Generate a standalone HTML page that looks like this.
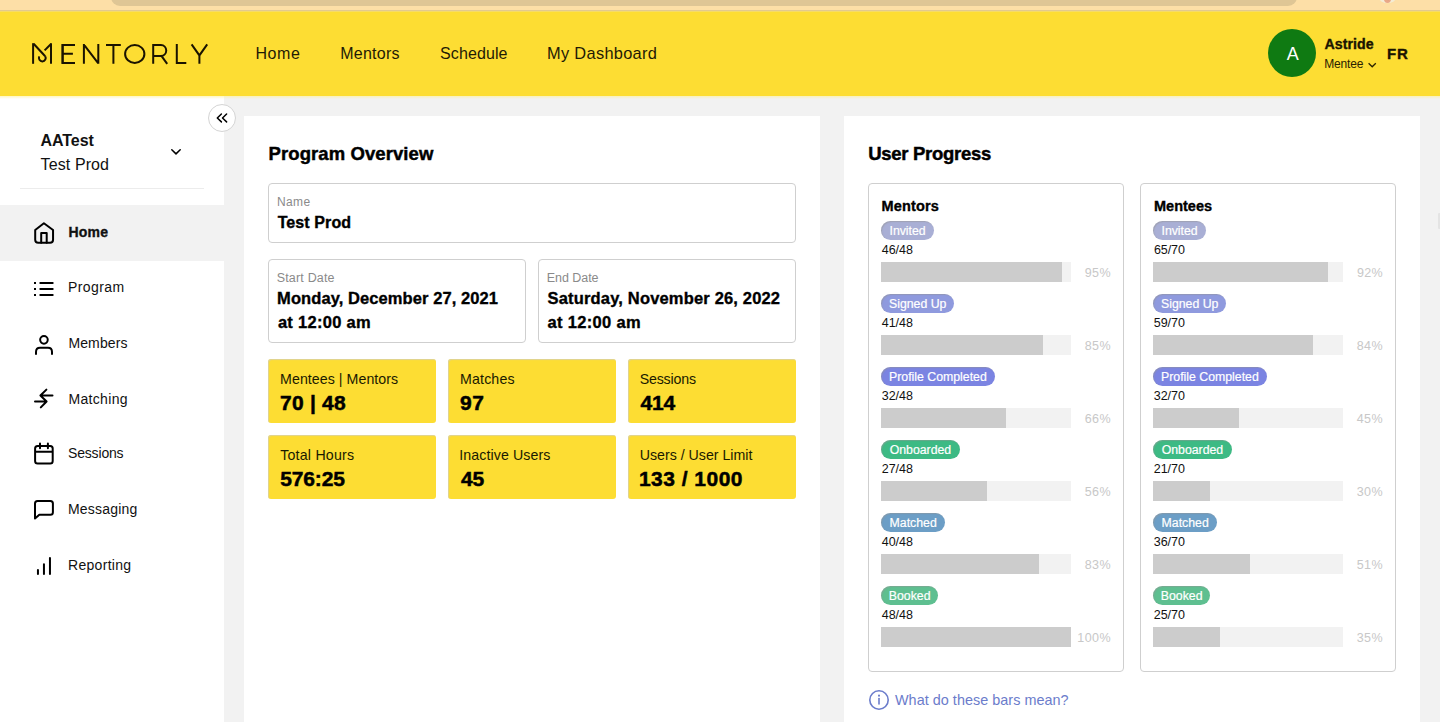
<!DOCTYPE html>
<html><head><meta charset="utf-8"><title>Mentorly</title>
<style>
*{margin:0;padding:0;box-sizing:border-box}
html,body{width:1440px;height:722px;overflow:hidden;background:#f2f2f2;font-family:"Liberation Sans",sans-serif}
.a{position:absolute}
.t{position:absolute;white-space:nowrap;line-height:1;font-family:"Liberation Sans",sans-serif}
</style></head><body>

<div class="a" style="left:0;top:0;width:1440px;height:11px;background:#fddfa7"></div>
<div class="a" style="left:111px;top:-10px;width:1186px;height:16px;background:#dfc695;border-radius:0 0 9px 9px"></div>
<div class="a" style="left:0;top:10px;width:1440px;height:1px;background:#e2c98f"></div>
<div class="a" style="left:0;top:11px;width:1440px;height:85px;background:#fddd33"></div>
<div class="a" style="left:0;top:11px;width:1440px;height:1px;background:#f6dc66"></div>
<div class="a" style="left:1379px;top:-8px;width:17px;height:11px;border-radius:50%;background:#f3efdc;opacity:.85"></div><div class="a" style="left:1384px;top:-6px;width:7px;height:8.5px;border-radius:50%;background:radial-gradient(circle at 60% 30%,#8a4a25 0,#c07a52 2px,#e9a888 4px)"></div>
<div class="a" style="left:0;top:96px;width:224px;height:626px;background:#fff"></div>
<div class="a" style="left:20px;top:188px;width:184px;height:1px;background:#ececec"></div>
<div class="a" style="left:0;top:205px;width:224px;height:56px;background:#f2f2f2"></div>
<div class="a" style="left:0;top:96px;width:1440px;height:3px;background:linear-gradient(rgba(255,240,140,.55),rgba(255,250,200,0))"></div>
<div class="a" style="left:208px;top:104px;width:28px;height:28px;border-radius:50%;background:#fff;border:1px solid #d4d4d4"></div>
<div class="a" style="left:244px;top:116px;width:576px;height:620px;background:#fff"></div>
<div class="a" style="left:844px;top:116px;width:576px;height:620px;background:#fff"></div>
<div class="a" style="left:1438px;top:213px;width:2px;height:16px;background:#e4e4e4;border-radius:1px 0 0 1px"></div>
<div class="a" style="left:268px;top:183px;width:528px;height:60px;border:1px solid #cfcfcf;border-radius:4px"></div>
<div class="a" style="left:268px;top:259px;width:258px;height:84px;border:1px solid #cfcfcf;border-radius:4px"></div>
<div class="a" style="left:538px;top:259px;width:258px;height:84px;border:1px solid #cfcfcf;border-radius:4px"></div>
<div class="a" style="left:268px;top:359px;width:168px;height:64px;background:#fddd33;border-radius:3px;box-shadow:inset 1px 1px 1px rgba(205,205,205,.65)"></div>
<div class="a" style="left:448px;top:359px;width:168px;height:64px;background:#fddd33;border-radius:3px;box-shadow:inset 1px 1px 1px rgba(205,205,205,.65)"></div>
<div class="a" style="left:628px;top:359px;width:168px;height:64px;background:#fddd33;border-radius:3px;box-shadow:inset 1px 1px 1px rgba(205,205,205,.65)"></div>
<div class="a" style="left:268px;top:435px;width:168px;height:64px;background:#fddd33;border-radius:3px;box-shadow:inset 1px 1px 1px rgba(205,205,205,.65)"></div>
<div class="a" style="left:448px;top:435px;width:168px;height:64px;background:#fddd33;border-radius:3px;box-shadow:inset 1px 1px 1px rgba(205,205,205,.65)"></div>
<div class="a" style="left:628px;top:435px;width:168px;height:64px;background:#fddd33;border-radius:3px;box-shadow:inset 1px 1px 1px rgba(205,205,205,.65)"></div>
<div class="a" style="left:868px;top:183px;width:256px;height:489px;border:1px solid #cfcfcf;border-radius:4px"></div>
<div class="a" style="left:881px;top:262.2px;width:190px;height:19.7px;background:#f2f2f2"></div>
<div class="a" style="left:881px;top:262.2px;width:180.5px;height:19.7px;background:#cccccc"></div>
<div class="a" style="left:881px;top:335.2px;width:190px;height:19.7px;background:#f2f2f2"></div>
<div class="a" style="left:881px;top:335.2px;width:161.5px;height:19.7px;background:#cccccc"></div>
<div class="a" style="left:881px;top:408.2px;width:190px;height:19.7px;background:#f2f2f2"></div>
<div class="a" style="left:881px;top:408.2px;width:125.4px;height:19.7px;background:#cccccc"></div>
<div class="a" style="left:881px;top:481.2px;width:190px;height:19.7px;background:#f2f2f2"></div>
<div class="a" style="left:881px;top:481.2px;width:106.4px;height:19.7px;background:#cccccc"></div>
<div class="a" style="left:881px;top:554.2px;width:190px;height:19.7px;background:#f2f2f2"></div>
<div class="a" style="left:881px;top:554.2px;width:157.7px;height:19.7px;background:#cccccc"></div>
<div class="a" style="left:881px;top:627.2px;width:190px;height:19.7px;background:#f2f2f2"></div>
<div class="a" style="left:881px;top:627.2px;width:190.0px;height:19.7px;background:#cccccc"></div>
<div class="a" style="left:1140px;top:183px;width:256px;height:489px;border:1px solid #cfcfcf;border-radius:4px"></div>
<div class="a" style="left:1153px;top:262.2px;width:190px;height:19.7px;background:#f2f2f2"></div>
<div class="a" style="left:1153px;top:262.2px;width:174.8px;height:19.7px;background:#cccccc"></div>
<div class="a" style="left:1153px;top:335.2px;width:190px;height:19.7px;background:#f2f2f2"></div>
<div class="a" style="left:1153px;top:335.2px;width:159.6px;height:19.7px;background:#cccccc"></div>
<div class="a" style="left:1153px;top:408.2px;width:190px;height:19.7px;background:#f2f2f2"></div>
<div class="a" style="left:1153px;top:408.2px;width:85.5px;height:19.7px;background:#cccccc"></div>
<div class="a" style="left:1153px;top:481.2px;width:190px;height:19.7px;background:#f2f2f2"></div>
<div class="a" style="left:1153px;top:481.2px;width:57.0px;height:19.7px;background:#cccccc"></div>
<div class="a" style="left:1153px;top:554.2px;width:190px;height:19.7px;background:#f2f2f2"></div>
<div class="a" style="left:1153px;top:554.2px;width:96.9px;height:19.7px;background:#cccccc"></div>
<div class="a" style="left:1153px;top:627.2px;width:190px;height:19.7px;background:#f2f2f2"></div>
<div class="a" style="left:1153px;top:627.2px;width:66.5px;height:19.7px;background:#cccccc"></div>
<div id="badge0_0" class="a" style="left:881.1px;top:221.2px;width:53px;height:18.6px;border-radius:10px;background:#a9afd5;font-size:12.3px;line-height:20.4px;color:#fff;text-align:center;white-space:nowrap;-webkit-text-stroke:0.2px #fff;box-shadow:inset 1px 1px 1px rgba(150,150,150,.5)">Invited</div>
<div id="badge0_1" class="a" style="left:881.1px;top:294.2px;width:73.2px;height:18.6px;border-radius:10px;background:#8f9ade;font-size:12.3px;line-height:20.4px;color:#fff;text-align:center;white-space:nowrap;-webkit-text-stroke:0.2px #fff;box-shadow:inset 1px 1px 1px rgba(150,150,150,.5)">Signed Up</div>
<div id="badge0_2" class="a" style="left:881.1px;top:367.2px;width:113.6px;height:18.6px;border-radius:10px;background:#7b84e2;font-size:12.3px;line-height:20.4px;color:#fff;text-align:center;white-space:nowrap;-webkit-text-stroke:0.2px #fff;box-shadow:inset 1px 1px 1px rgba(150,150,150,.5)">Profile Completed</div>
<div id="badge0_3" class="a" style="left:881.1px;top:440.2px;width:78.7px;height:18.6px;border-radius:10px;background:#3dba84;font-size:12.3px;line-height:20.4px;color:#fff;text-align:center;white-space:nowrap;-webkit-text-stroke:0.2px #fff;box-shadow:inset 1px 1px 1px rgba(150,150,150,.5)">Onboarded</div>
<div id="badge0_4" class="a" style="left:881.1px;top:513.2px;width:64.2px;height:18.6px;border-radius:10px;background:#6c9ec6;font-size:12.3px;line-height:20.4px;color:#fff;text-align:center;white-space:nowrap;-webkit-text-stroke:0.2px #fff;box-shadow:inset 1px 1px 1px rgba(150,150,150,.5)">Matched</div>
<div id="badge0_5" class="a" style="left:881.1px;top:586.2px;width:57.1px;height:18.6px;border-radius:10px;background:#5ebf90;font-size:12.3px;line-height:20.4px;color:#fff;text-align:center;white-space:nowrap;-webkit-text-stroke:0.2px #fff;box-shadow:inset 1px 1px 1px rgba(150,150,150,.5)">Booked</div>
<div id="badge1_0" class="a" style="left:1153.1px;top:221.2px;width:53px;height:18.6px;border-radius:10px;background:#a9afd5;font-size:12.3px;line-height:20.4px;color:#fff;text-align:center;white-space:nowrap;-webkit-text-stroke:0.2px #fff;box-shadow:inset 1px 1px 1px rgba(150,150,150,.5)">Invited</div>
<div id="badge1_1" class="a" style="left:1153.1px;top:294.2px;width:73.2px;height:18.6px;border-radius:10px;background:#8f9ade;font-size:12.3px;line-height:20.4px;color:#fff;text-align:center;white-space:nowrap;-webkit-text-stroke:0.2px #fff;box-shadow:inset 1px 1px 1px rgba(150,150,150,.5)">Signed Up</div>
<div id="badge1_2" class="a" style="left:1153.1px;top:367.2px;width:113.6px;height:18.6px;border-radius:10px;background:#7b84e2;font-size:12.3px;line-height:20.4px;color:#fff;text-align:center;white-space:nowrap;-webkit-text-stroke:0.2px #fff;box-shadow:inset 1px 1px 1px rgba(150,150,150,.5)">Profile Completed</div>
<div id="badge1_3" class="a" style="left:1153.1px;top:440.2px;width:78.7px;height:18.6px;border-radius:10px;background:#3dba84;font-size:12.3px;line-height:20.4px;color:#fff;text-align:center;white-space:nowrap;-webkit-text-stroke:0.2px #fff;box-shadow:inset 1px 1px 1px rgba(150,150,150,.5)">Onboarded</div>
<div id="badge1_4" class="a" style="left:1153.1px;top:513.2px;width:64.2px;height:18.6px;border-radius:10px;background:#6c9ec6;font-size:12.3px;line-height:20.4px;color:#fff;text-align:center;white-space:nowrap;-webkit-text-stroke:0.2px #fff;box-shadow:inset 1px 1px 1px rgba(150,150,150,.5)">Matched</div>
<div id="badge1_5" class="a" style="left:1153.1px;top:586.2px;width:57.1px;height:18.6px;border-radius:10px;background:#5ebf90;font-size:12.3px;line-height:20.4px;color:#fff;text-align:center;white-space:nowrap;-webkit-text-stroke:0.2px #fff;box-shadow:inset 1px 1px 1px rgba(150,150,150,.5)">Booked</div>
<svg class="a" style="left:0;top:0" width="1440" height="722" viewBox="0 0 1440 722" fill="none">
<g stroke="#1a1300" stroke-width="2" stroke-linecap="butt" stroke-linejoin="miter">
 <path d="M33.1 43.2V63.8"/>
 <path d="M33.6 43.8L45.2 56.2"/>
 <path d="M45.2 56.2A3.4 3.4 0 1 1 39.3 56.4"/>
 <path d="M51 43.2V63.8"/>
 <path d="M51 44L44.6 50.4"/>
 <path d="M75 45H62.6V62.9H75M62.6 53.8H72.9"/>
 <path d="M62.6 44.1V63.8"/>
 <path d="M83.9 63.8V44.1M83.9 44.6L98.3 63.3M98.3 44.1V63.8"/>
 <path d="M106 44.95H120.8M113.4 44.95V63.8"/>
 <ellipse cx="134.75" cy="53.95" rx="9.65" ry="8.95"/>
 <path d="M153.2 63.8V44.95H160.9A5.58 5.58 0 0 1 160.9 56.1H153.2M161.6 56.1L167.2 63.8"/>
 <path d="M176.8 44.1V62.9H186.3"/>
 <path d="M191.6 44.4L199.4 55.4L207.2 44.4M199.4 55.4V63.8"/>
</g>
<path d="M1368.6 63.2L1372.2 66.8L1375.8 63.2" stroke="#2a2200" stroke-width="1.3"/>
<g stroke="#000" stroke-width="1.5" stroke-linecap="round" stroke-linejoin="round">
 <path d="M221.4 114L217.3 118L221.4 121.9M226.6 114L222.5 118L226.6 121.9"/>
 <path d="M171.8 149.8L176 153.9L180.2 149.7"/>
</g>
<g stroke="#000" stroke-width="2" stroke-linecap="round" stroke-linejoin="round">
 <path d="M35.2 230L43.9 223.3L53.05 230V239.7Q53.05 242.7 50.05 242.7H38.2Q35.2 242.7 35.2 239.7Z"/>
 <path d="M41.2 242.7V233H46.7V242.7"/>
 <path d="M40.3 283H52.7M40.3 289H52.7M40.3 294.9H52.7"/>
 <path d="M35 283H35.01M35 289H35.01M35 294.9H35.01" stroke-linecap="square"/>
 <circle cx="43.95" cy="339.85" r="3.8"/>
 <path d="M36 354V352Q36 347.8 40 347.8H48Q52 347.8 52 352V354"/>
 <path d="M46.4 389.6L40.4 395.5L46.6 401.5L40.8 407.4M40.4 395.5H52.5M35 401.6H46.6"/>
 <path d="M35.1 448.5Q35.1 446 37.6 446H50.2Q52.7 446 52.7 448.5V461Q52.7 463.5 50.2 463.5H37.6Q35.1 463.5 35.1 461ZM35.1 451.8H52.7M40 443.6V448.3M47.9 443.6V448.3"/>
 <path d="M35 518.5V503.4Q35 500.9 37.5 500.9H50.4Q52.9 500.9 52.9 503.4V512.3Q52.9 514.8 50.4 514.8H39.3Z"/>
 <path d="M37.95 570V573.9M43.95 564.2V573.9M49.96 558V573.9"/>
</g>
<g stroke="#6b7ccb" stroke-width="1.6" stroke-linecap="round">
 <circle cx="879" cy="700" r="9.2"/>
 <path d="M879 698.5V704"/>
 <path d="M879 695.6V695.7" stroke-width="2"/>
</g>
</svg>

<div class="a" style="left:1268px;top:29px;width:48px;height:48px;border-radius:50%;background:#0f7a12"></div>
<div id="nav_home" class="t" style="left:255.50px;top:46.41px;font-size:16px;font-weight:400;color:#1f1a05;letter-spacing:0.533px;">Home</div>
<div id="nav_mentors" class="t" style="left:340.20px;top:46.41px;font-size:16px;font-weight:400;color:#1f1a05;letter-spacing:0.267px;">Mentors</div>
<div id="nav_sched" class="t" style="left:440.00px;top:46.41px;font-size:16px;font-weight:400;color:#1f1a05;letter-spacing:0.114px;">Schedule</div>
<div id="nav_dash" class="t" style="left:547.10px;top:45.40px;font-size:16.4px;font-weight:400;color:#1f1a05;letter-spacing:0.291px;">My Dashboard</div>
<div id="astride" class="t" style="left:1324.40px;top:36.91px;font-size:14.2px;font-weight:700;color:#1a1400;letter-spacing:0.067px;-webkit-text-stroke:0.35px #1a1400;">Astride</div>
<div id="mentee" class="t" style="left:1324.20px;top:58.31px;font-size:12px;font-weight:400;color:#2a2200;letter-spacing:-0.150px;">Mentee</div>
<div id="fr" class="t" style="left:1387.00px;top:45.90px;font-size:15px;font-weight:700;color:#1a1400;letter-spacing:0.800px;-webkit-text-stroke:0.35px #1a1400;">FR</div>
<div id="avatarA" class="t" style="left:1286.80px;top:45.01px;font-size:18px;font-weight:400;color:#fff;">A</div>
<div id="aatest" class="t" style="left:40.60px;top:132.81px;font-size:16px;font-weight:700;color:#111;letter-spacing:-0.080px;">AATest</div>
<div id="testprod_sb" class="t" style="left:40.60px;top:157.31px;font-size:16px;font-weight:400;color:#111;letter-spacing:0.100px;">Test Prod</div>
<div id="m_Home" class="t" style="left:68.40px;top:224.51px;font-size:14px;font-weight:700;color:#111;letter-spacing:0.267px;-webkit-text-stroke:0.35px #111;">Home</div>
<div id="m_Program" class="t" style="left:68.00px;top:280.41px;font-size:14px;font-weight:400;color:#111;letter-spacing:0.400px;">Program</div>
<div id="m_Members" class="t" style="left:68.40px;top:336.31px;font-size:14px;font-weight:400;color:#111;letter-spacing:0.133px;">Members</div>
<div id="m_Matching" class="t" style="left:68.40px;top:392.31px;font-size:14px;font-weight:400;color:#111;letter-spacing:0.343px;">Matching</div>
<div id="m_Sessions" class="t" style="left:68.00px;top:445.81px;font-size:14px;font-weight:400;color:#111;letter-spacing:-0.171px;">Sessions</div>
<div id="m_Messaging" class="t" style="left:68.00px;top:501.61px;font-size:14px;font-weight:400;color:#111;letter-spacing:0.200px;">Messaging</div>
<div id="m_Reporting" class="t" style="left:68.00px;top:557.51px;font-size:14px;font-weight:400;color:#111;letter-spacing:0.300px;">Reporting</div>
<div id="po_title" class="t" style="left:268.60px;top:145.30px;font-size:18.5px;font-weight:700;color:#000;letter-spacing:0.080px;-webkit-text-stroke:0.45px #000;">Program Overview</div>
<div id="name_lbl" class="t" style="left:276.90px;top:195.91px;font-size:12px;font-weight:400;color:#8a8a8a;letter-spacing:0.400px;">Name</div>
<div id="name_val" class="t" style="left:277.70px;top:214.81px;font-size:16px;font-weight:700;color:#000;letter-spacing:0.100px;-webkit-text-stroke:0.35px #000;">Test Prod</div>
<div id="sd_lbl" class="t" style="left:276.70px;top:271.71px;font-size:12.5px;font-weight:400;color:#8a8a8a;letter-spacing:0.178px;">Start Date</div>
<div id="sd_val1" class="t" style="left:277.10px;top:290.01px;font-size:16.5px;font-weight:700;color:#000;letter-spacing:0.083px;-webkit-text-stroke:0.35px #000;">Monday, December 27, 2021</div>
<div id="sd_val2" class="t" style="left:277.90px;top:313.81px;font-size:16.5px;font-weight:700;color:#000;letter-spacing:0.280px;-webkit-text-stroke:0.35px #000;">at 12:00 am</div>
<div id="ed_lbl" class="t" style="left:546.80px;top:271.71px;font-size:12.5px;font-weight:400;color:#8a8a8a;letter-spacing:-0.057px;">End Date</div>
<div id="ed_val1" class="t" style="left:547.60px;top:290.01px;font-size:16.5px;font-weight:700;color:#000;letter-spacing:0.169px;-webkit-text-stroke:0.35px #000;">Saturday, November 26, 2022</div>
<div id="ed_val2" class="t" style="left:547.60px;top:313.81px;font-size:16.5px;font-weight:700;color:#000;letter-spacing:0.320px;-webkit-text-stroke:0.35px #000;">at 12:00 am</div>
<div id="st_l0" class="t" style="left:280.10px;top:372.01px;font-size:14.2px;font-weight:400;color:#1a1a00;letter-spacing:0.050px;">Mentees | Mentors</div>
<div id="st_v0" class="t" style="left:280.10px;top:392.40px;font-size:21px;font-weight:700;color:#000;letter-spacing:0.200px;-webkit-text-stroke:0.5px #000;">70 | 48</div>
<div id="st_l1" class="t" style="left:460.10px;top:372.01px;font-size:14.2px;font-weight:400;color:#1a1a00;letter-spacing:0.133px;">Matches</div>
<div id="st_v1" class="t" style="left:460.10px;top:392.40px;font-size:21px;font-weight:700;color:#000;letter-spacing:0.400px;-webkit-text-stroke:0.5px #000;">97</div>
<div id="st_l2" class="t" style="left:639.70px;top:372.01px;font-size:14.2px;font-weight:400;color:#1a1a00;letter-spacing:-0.171px;">Sessions</div>
<div id="st_v2" class="t" style="left:640.50px;top:392.40px;font-size:21px;font-weight:700;color:#000;letter-spacing:-0.200px;-webkit-text-stroke:0.5px #000;">414</div>
<div id="st_l3" class="t" style="left:280.18px;top:448.02px;font-size:14.2px;font-weight:400;color:#1a1a00;letter-spacing:0.216px;">Total Hours</div>
<div id="st_v3" class="t" style="left:280.18px;top:468.42px;font-size:21px;font-weight:700;color:#000;letter-spacing:-0.128px;-webkit-text-stroke:0.5px #000;">576:25</div>
<div id="st_l4" class="t" style="left:459.30px;top:448.01px;font-size:14.2px;font-weight:400;color:#1a1a00;letter-spacing:0.092px;">Inactive Users</div>
<div id="st_v4" class="t" style="left:460.90px;top:468.40px;font-size:21px;font-weight:700;color:#000;-webkit-text-stroke:0.5px #000;">45</div>
<div id="st_l5" class="t" style="left:639.70px;top:448.01px;font-size:14.2px;font-weight:400;color:#1a1a00;">Users / User Limit</div>
<div id="st_v5" class="t" style="left:638.90px;top:468.40px;font-size:21px;font-weight:700;color:#000;letter-spacing:0.489px;-webkit-text-stroke:0.5px #000;">133 / 1000</div>
<div id="up_title" class="t" style="left:868.30px;top:144.80px;font-size:18.5px;font-weight:700;color:#000;letter-spacing:-0.300px;-webkit-text-stroke:0.45px #000;">User Progress</div>
<div id="bx0_title" class="t" style="left:881.60px;top:199.41px;font-size:14.5px;font-weight:700;color:#000;letter-spacing:0.133px;-webkit-text-stroke:0.35px #000;">Mentors</div>
<div id="bx0_frac0" class="t" style="left:881.70px;top:243.71px;font-size:12.5px;font-weight:400;color:#111;letter-spacing:0.000px;">46/48</div>
<div id="bx0_pct0" class="t" style="right:329.10px;text-align:right;top:266.71px;font-size:12.5px;font-weight:400;color:#c8c8c8;letter-spacing:0.400px;">95%</div>
<div id="bx0_frac1" class="t" style="left:881.70px;top:316.71px;font-size:12.5px;font-weight:400;color:#111;letter-spacing:0.000px;">41/48</div>
<div id="bx0_pct1" class="t" style="right:329.10px;text-align:right;top:339.71px;font-size:12.5px;font-weight:400;color:#c8c8c8;letter-spacing:0.400px;">85%</div>
<div id="bx0_frac2" class="t" style="left:881.70px;top:389.71px;font-size:12.5px;font-weight:400;color:#111;letter-spacing:0.000px;">32/48</div>
<div id="bx0_pct2" class="t" style="right:329.10px;text-align:right;top:412.71px;font-size:12.5px;font-weight:400;color:#c8c8c8;letter-spacing:0.400px;">66%</div>
<div id="bx0_frac3" class="t" style="left:881.70px;top:462.71px;font-size:12.5px;font-weight:400;color:#111;letter-spacing:0.000px;">27/48</div>
<div id="bx0_pct3" class="t" style="right:329.10px;text-align:right;top:485.71px;font-size:12.5px;font-weight:400;color:#c8c8c8;letter-spacing:0.400px;">56%</div>
<div id="bx0_frac4" class="t" style="left:881.70px;top:535.71px;font-size:12.5px;font-weight:400;color:#111;letter-spacing:0.000px;">40/48</div>
<div id="bx0_pct4" class="t" style="right:329.10px;text-align:right;top:558.71px;font-size:12.5px;font-weight:400;color:#c8c8c8;letter-spacing:0.400px;">83%</div>
<div id="bx0_frac5" class="t" style="left:881.70px;top:608.71px;font-size:12.5px;font-weight:400;color:#111;letter-spacing:0.000px;">48/48</div>
<div id="bx0_pct5" class="t" style="right:329.10px;text-align:right;top:631.71px;font-size:12.5px;font-weight:400;color:#c8c8c8;letter-spacing:0.400px;">100%</div>
<div id="bx1_title" class="t" style="left:1154.00px;top:199.41px;font-size:14.5px;font-weight:700;color:#000;-webkit-text-stroke:0.35px #000;">Mentees</div>
<div id="bx1_frac0" class="t" style="left:1153.94px;top:243.69px;font-size:12.5px;font-weight:400;color:#111;letter-spacing:-0.080px;">65/70</div>
<div id="bx1_pct0" class="t" style="right:57.10px;text-align:right;top:266.69px;font-size:12.5px;font-weight:400;color:#c8c8c8;letter-spacing:0.280px;">92%</div>
<div id="bx1_frac1" class="t" style="left:1153.70px;top:316.71px;font-size:12.5px;font-weight:400;color:#111;letter-spacing:0.000px;">59/70</div>
<div id="bx1_pct1" class="t" style="right:57.10px;text-align:right;top:339.71px;font-size:12.5px;font-weight:400;color:#c8c8c8;letter-spacing:0.400px;">84%</div>
<div id="bx1_frac2" class="t" style="left:1153.70px;top:389.71px;font-size:12.5px;font-weight:400;color:#111;letter-spacing:0.000px;">32/70</div>
<div id="bx1_pct2" class="t" style="right:57.10px;text-align:right;top:412.71px;font-size:12.5px;font-weight:400;color:#c8c8c8;letter-spacing:0.400px;">45%</div>
<div id="bx1_frac3" class="t" style="left:1153.70px;top:462.71px;font-size:12.5px;font-weight:400;color:#111;letter-spacing:0.000px;">21/70</div>
<div id="bx1_pct3" class="t" style="right:57.10px;text-align:right;top:485.71px;font-size:12.5px;font-weight:400;color:#c8c8c8;letter-spacing:0.400px;">30%</div>
<div id="bx1_frac4" class="t" style="left:1153.70px;top:535.71px;font-size:12.5px;font-weight:400;color:#111;letter-spacing:0.000px;">36/70</div>
<div id="bx1_pct4" class="t" style="right:57.10px;text-align:right;top:558.71px;font-size:12.5px;font-weight:400;color:#c8c8c8;letter-spacing:0.400px;">51%</div>
<div id="bx1_frac5" class="t" style="left:1153.70px;top:608.71px;font-size:12.5px;font-weight:400;color:#111;letter-spacing:0.000px;">25/70</div>
<div id="bx1_pct5" class="t" style="right:57.10px;text-align:right;top:631.71px;font-size:12.5px;font-weight:400;color:#c8c8c8;letter-spacing:0.400px;">35%</div>
<div id="link" class="t" style="left:895.00px;top:692.90px;font-size:14.4px;font-weight:400;color:#6b7ccb;letter-spacing:0.035px;">What do these bars mean?</div>
</body></html>
